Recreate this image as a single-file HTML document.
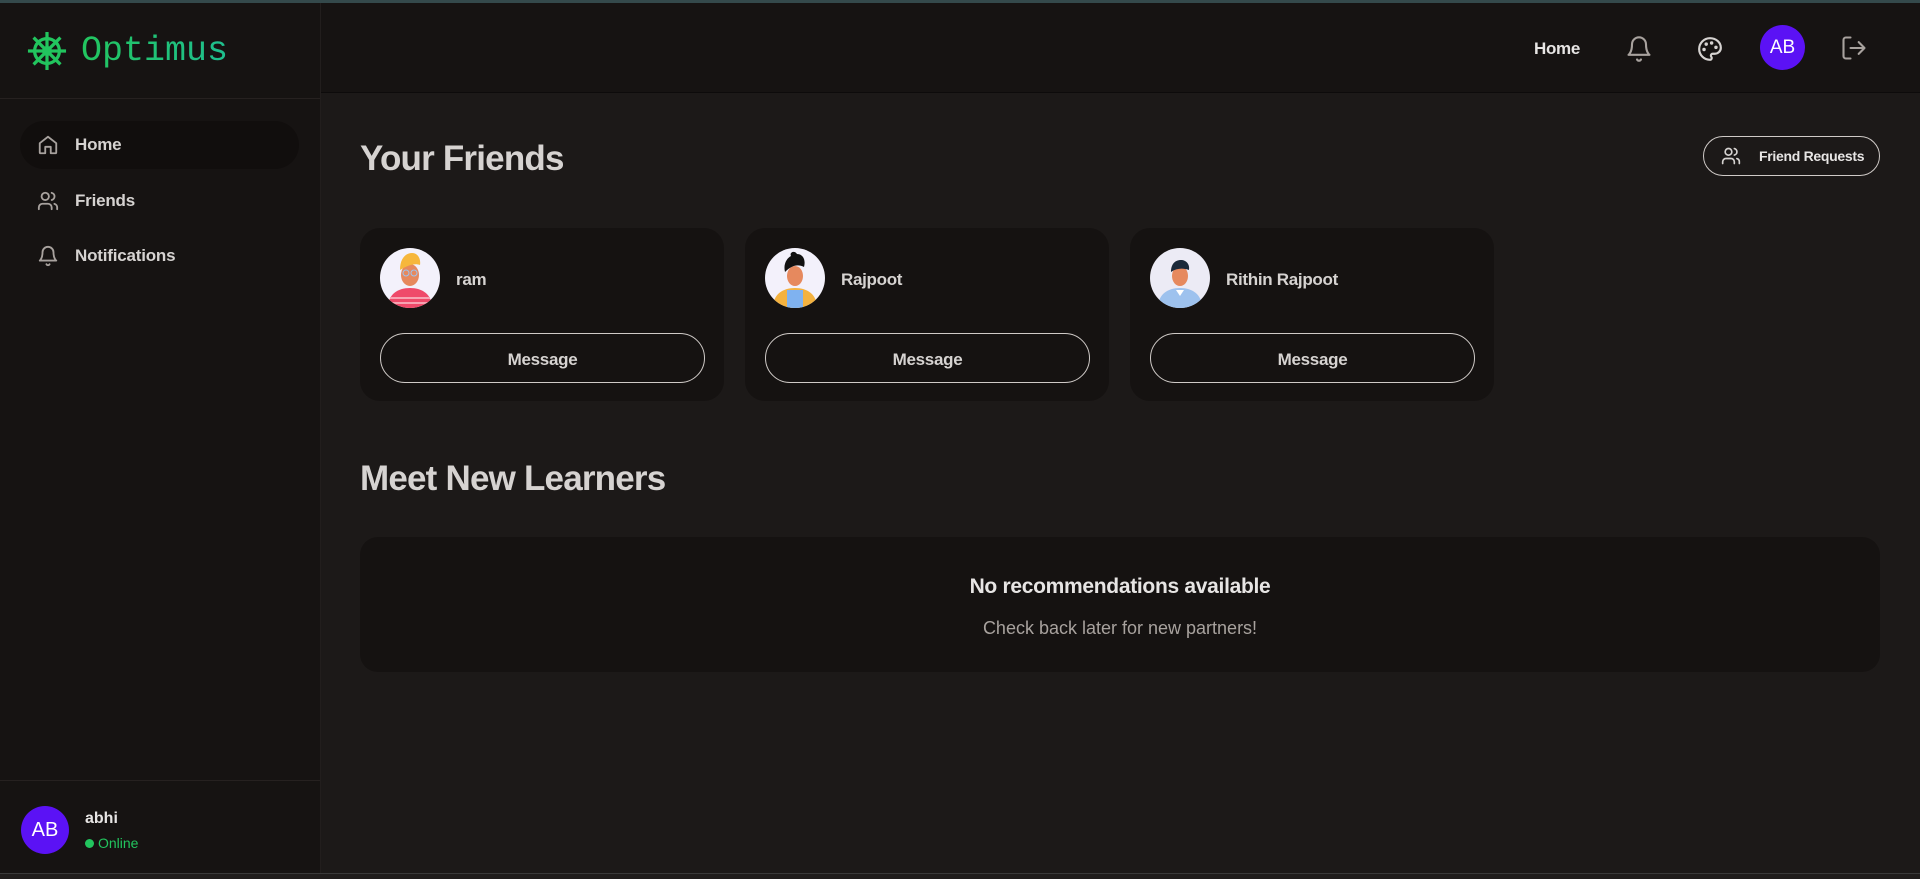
<!DOCTYPE html>
<html><head><meta charset="utf-8"><style>
*{box-sizing:border-box;margin:0;padding:0}
body{width:1920px;height:879px;overflow:hidden;background:#1c1918;font-family:"Liberation Sans","DejaVu Sans",sans-serif;color:#d6d3d1;position:relative}
.top{position:absolute;left:0;top:0;width:1920px;height:3px;background:#34494b}
.side{position:absolute;left:0;top:3px;width:321px;height:870px;background:#161312;border-right:1px solid #221e1d}
.logo{height:96px;border-bottom:1px solid #262120;display:flex;align-items:center;padding-left:27px}
.logo span{font-family:"Liberation Mono",monospace;font-size:35px;margin-left:14px;background:linear-gradient(90deg,#22c55e,#1fbf8f);-webkit-background-clip:text;color:transparent}
.nav{position:absolute;left:20px;width:279px;height:48px;border-radius:24px;display:flex;align-items:center;padding-left:17px;font-size:17px;font-weight:bold;color:#d6d3d1;letter-spacing:-.2px}
.nav svg{margin-right:16px}
.foot{position:absolute;left:0;top:777px;width:320px;height:93px;border-top:1px solid #262120}
.av{border-radius:50%;background:#5b12f5;color:#fff;display:flex;align-items:center;justify-content:center}
.hdr{position:absolute;left:321px;top:3px;width:1599px;height:90px;background:#161312;border-bottom:1px solid #0d0b0b}
h1{position:absolute;font-size:35px;font-weight:bold;color:#d6d3d1;letter-spacing:-.8px}
.card{position:absolute;top:228px;width:364px;height:173px;background:#151211;border-radius:20px}
.card .pic{position:absolute;left:20px;top:20px;width:60px;height:60px;border-radius:50%;background:#f3f1fb;overflow:hidden}
.card .nm{position:absolute;left:96px;top:42px;font-size:17px;font-weight:bold;letter-spacing:-.3px}
.card .btn{position:absolute;left:20px;top:105px;width:325px;height:50px;border:1px solid #cfcac7;border-radius:25px;display:flex;align-items:center;justify-content:center;font-size:17px;font-weight:bold;padding-top:3px;letter-spacing:-.3px}
</style></head><body>
<div class="top"></div>
<div class="side">
 <div class="logo">
  <svg width="40" height="40" viewBox="0 0 42 42" fill="none" stroke="#22c55e" stroke-width="3.4"><circle cx="21" cy="21" r="13"/><circle cx="21" cy="21" r="3.5"/><path d="M21 1v40M1 21h40M6.9 6.9l28.2 28.2M35.1 6.9L6.9 35.1"/></svg>
  <span>Optimus</span>
 </div>
 <div class="nav" style="top:118px;background:#110e0d"><svg width="22" height="22" viewBox="0 0 24 24" fill="none" stroke="#a8a29e" stroke-width="2" stroke-linecap="round" stroke-linejoin="round"><path d="M3 10l9-7 9 7v10a1 1 0 0 1-1 1h-5v-7H9v7H4a1 1 0 0 1-1-1z"/></svg>Home</div>
 <div class="nav" style="top:174px"><svg width="22" height="22" viewBox="0 0 24 24" fill="none" stroke="#a8a29e" stroke-width="2" stroke-linecap="round"><circle cx="9" cy="7" r="4"/><path d="M2 21v-2a4 4 0 0 1 4-4h6a4 4 0 0 1 4 4v2M16 3.1a4 4 0 0 1 0 7.8M22 21v-2a4 4 0 0 0-3-3.9"/></svg>Friends</div>
 <div class="nav" style="top:229px"><svg width="22" height="22" viewBox="0 0 24 24" fill="none" stroke="#a8a29e" stroke-width="2" stroke-linecap="round" stroke-linejoin="round"><path d="M6 8a6 6 0 0 1 12 0c0 7 3 9 3 9H3s3-2 3-9M10.3 21a1.9 1.9 0 0 0 3.4 0"/></svg>Notifications</div>
 <div class="foot">
  <div class="av" style="position:absolute;left:21px;top:25px;width:48px;height:48px;font-size:20px">AB</div>
  <div style="position:absolute;left:85px;top:29px;font-size:16px;font-weight:bold;color:#e7e5e4">abhi</div>
  <div style="position:absolute;left:85px;top:54px;font-size:14px;color:#22c55e"><span style="display:inline-block;width:9px;height:9px;border-radius:50%;background:#22c55e;margin-right:4px"></span>Online</div>
 </div>
</div>
<div class="hdr">
 <div style="position:absolute;left:1213px;top:36px;font-size:17px;font-weight:bold;color:#e7e5e4;letter-spacing:-.3px">Home</div>
 <svg style="position:absolute;left:1304px;top:32px" width="28" height="28" viewBox="0 0 24 24" fill="none" stroke="#a8a29e" stroke-width="1.8" stroke-linecap="round" stroke-linejoin="round"><path d="M6 8a6 6 0 0 1 12 0c0 7 3 9 3 9H3s3-2 3-9M10.3 21a1.9 1.9 0 0 0 3.4 0"/></svg>
 <svg style="position:absolute;left:1376px;top:33px" width="26" height="26" viewBox="0 0 24 24" fill="none" stroke="#d6d3d1" stroke-width="2" stroke-linecap="round"><path d="M12 2a10 10 0 0 0 0 20c1 0 1.6-.8 1.6-1.7 0-.4-.2-.8-.4-1.1-.3-.3-.4-.6-.4-1.1a1.6 1.6 0 0 1 1.6-1.7h2A5.6 5.6 0 0 0 22 10.9C22 6 17.5 2 12 2z"/><circle cx="13.5" cy="6.5" r=".6" fill="#d6d3d1"/><circle cx="17.5" cy="10.5" r=".6" fill="#d6d3d1"/><circle cx="8.5" cy="7.5" r=".6" fill="#d6d3d1"/><circle cx="6.5" cy="12.5" r=".6" fill="#d6d3d1"/></svg>
 <div class="av" style="position:absolute;left:1439px;top:22px;width:45px;height:45px;font-size:19px">AB</div>
 <svg style="position:absolute;left:1519px;top:31px" width="28" height="28" viewBox="0 0 24 24" fill="none" stroke="#a8a29e" stroke-width="1.8" stroke-linecap="round" stroke-linejoin="round"><path d="M9 21H5a2 2 0 0 1-2-2V5a2 2 0 0 1 2-2h4M16 17l5-5-5-5M21 12H9"/></svg>
</div>
<h1 style="left:360px;top:139px">Your Friends</h1>
<div style="position:absolute;left:1703px;top:136px;width:177px;height:40px;border:1px solid #cfcac7;border-radius:20px;display:flex;align-items:center;padding-left:17px;font-size:14px;font-weight:bold;color:#e7e5e4;letter-spacing:-.3px"><svg width="20" height="20" viewBox="0 0 24 24" fill="none" stroke="#d6d3d1" stroke-width="2" stroke-linecap="round" style="margin-right:18px"><circle cx="9" cy="7" r="4"/><path d="M2 21v-2a4 4 0 0 1 4-4h6a4 4 0 0 1 4 4v2M16 3.1a4 4 0 0 1 0 7.8M22 21v-2a4 4 0 0 0-3-3.9"/></svg>Friend Requests</div>

<div class="card" style="left:360px"><div class="pic"><svg width="60" height="60" viewBox="0 0 60 60"><path d="M8 60c0-14 10-20 22-20s22 6 22 20z" fill="#ef4a6a"/><path d="M10 50h40M12 55h38" stroke="#f7a3b2" stroke-width="2"/><ellipse cx="30" cy="27" rx="9" ry="11" fill="#e6895e"/><path d="M20 22c0-12 6-17 12-17s9 6 8 12c-5-2-12 0-20 5z" fill="#f6b73c"/><circle cx="26" cy="25" r="3" fill="none" stroke="#9bc4f0"/><circle cx="34" cy="25" r="3" fill="none" stroke="#9bc4f0"/></svg></div><div class="nm">ram</div><div class="btn">Message</div></div>
<div class="card" style="left:745px"><div class="pic"><svg width="60" height="60" viewBox="0 0 60 60"><path d="M8 60c0-14 10-20 22-20s22 6 22 20z" fill="#f3b240"/><path d="M22 60V42h16v18z" fill="#7fb2f0"/><ellipse cx="30" cy="28" rx="8" ry="10" fill="#e6895e"/><path d="M20 24c-2-8 2-14 6-16-2-4 4-6 6-2 6 0 9 6 7 13-6-3-12-2-19 5z" fill="#111"/></svg></div><div class="nm">Rajpoot</div><div class="btn">Message</div></div>
<div class="card" style="left:1130px"><div class="pic" style="background:#ecebf5"><svg width="60" height="60" viewBox="0 0 60 60"><path d="M8 60c0-14 10-20 22-20s22 6 22 20z" fill="#9ec2ee"/><path d="M26 42l4 6 4-6" fill="#fff"/><ellipse cx="30" cy="28" rx="8" ry="10" fill="#e6895e"/><path d="M21 24c0-9 5-12 10-12s9 4 8 10c-6-2-12-2-18 2z" fill="#1b2a3a"/></svg></div><div class="nm">Rithin Rajpoot</div><div class="btn">Message</div></div>

<h1 style="left:360px;top:459px">Meet New Learners</h1>
<div style="position:absolute;left:360px;top:537px;width:1520px;height:135px;background:#151211;border-radius:18px;text-align:center">
 <div style="margin-top:38px;font-size:21px;font-weight:bold;color:#e7e5e4;letter-spacing:-.3px">No recommendations available</div>
 <div style="margin-top:19px;font-size:18px;color:#a8a29e">Check back later for new partners!</div>
</div>
<div style="position:absolute;left:0;top:873px;width:1920px;height:6px;background:#201d1c;border-top:1px solid #3a3a3a"></div>
</body></html>
